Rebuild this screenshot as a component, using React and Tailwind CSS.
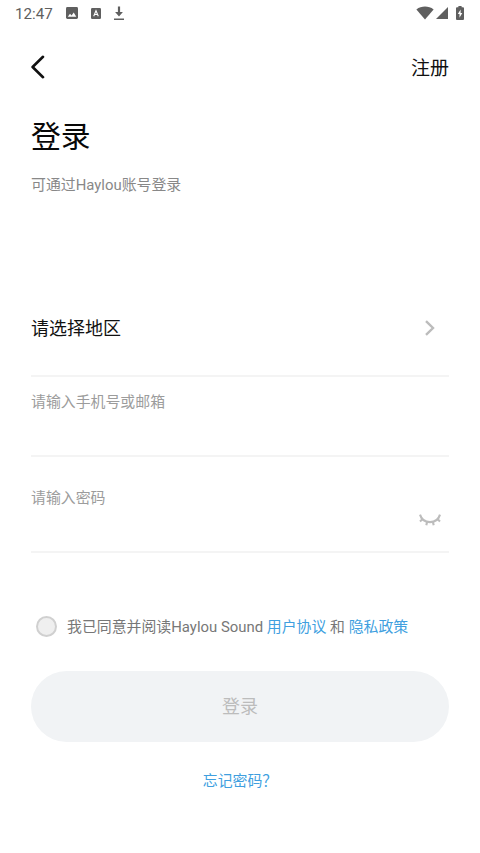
function StatusBar() {
  return (
    <div className="flex h-[27px] items-center pl-[15px] pr-4 text-[#5f5f5f]">
      <span className="w-[38px] text-[15.2px] leading-[18px] whitespace-nowrap">12:47</span>
      <svg className="mb-px ml-[13px] size-3" viewBox="0 0 12 12">
        <rect width="12" height="12" rx="1.4" fill="currentColor" />
        <path d="M1.8 9.8 4 6.7 5.6 8.5 7.7 5.6 10.3 9.8Z" fill="#fff" />
      </svg>
      <svg className="mb-px ml-[12.5px] h-[11px] w-[10px]" viewBox="0 0 10 11">
        <rect width="10" height="11" rx="1.2" fill="currentColor" />
        <path d="M2.7 8.2 5 2.7 7.3 8.2M3.5 6.5h3" fill="none" stroke="#fff" strokeWidth="1.1" />
      </svg>
      <svg className="mb-px ml-3 h-[15px] w-3" viewBox="0 0 12 15">
        <path d="M4.9 0.5h2.2v5.6h2.8L6 10.6 2.1 6.1h2.8ZM1 12.6h10v1.5H1Z" fill="currentColor" />
      </svg>
      <div className="mb-[2px] ml-auto flex items-center">
        <svg className="h-[14px] w-[18px]" viewBox="0 0 18 14">
          <path d="M9 13.6 0.4 3.4C5.4-0.4 12.6-0.4 17.6 3.4Z" fill="currentColor" />
        </svg>
        <svg className="ml-[2px] mt-px size-3" viewBox="0 0 12 12">
          <path d="M12 0v12H0Z" fill="currentColor" />
        </svg>
        <svg className="ml-2 h-[14px] w-2" viewBox="0 0 8 14">
          <path d="M2.4 0h3.2v1.3H7q1 0 1 1V13q0 1-1 1H1q-1 0-1-1V2.3q0-1 1-1h1.4Z" fill="currentColor" />
          <path d="M4.6 3.4 1.8 8h1.7v3.7L6.3 7H4.6Z" fill="#fff" />
        </svg>
      </div>
    </div>
  );
}

export default function App() {
  return (
    <div
      lang="zh-CN"
      className="flex h-[853px] w-[480px] flex-col bg-white font-['Roboto','Noto_Sans_CJK_SC',sans-serif]"
    >
      <StatusBar />
      <main className="flex flex-col px-[31px]">
        <header className="flex h-20 items-center justify-between">
          <button aria-label="返回">
            <svg className="h-6 w-[14px]" viewBox="0 0 14 24" fill="none" stroke="#111" strokeWidth="2.6">
              <path d="M12 1.8 1.6 12 12 22.2" strokeLinecap="round" strokeLinejoin="round" />
            </svg>
          </button>
          <button className="pt-[3px] text-[19px] leading-7 text-[#111]">注册</button>
        </header>

        <h1 className="h-[58px] text-[29.8px] leading-[60px] text-[#080808]">登录</h1>
        <p className="mt-2 h-6 text-[14.9px] leading-6 text-[#888]">可通过Haylou账号登录</p>

        <button className="mt-[83px] flex h-[97px] items-center justify-between border-b-2 border-[#f4f4f4] pr-[14px] text-left">
          <span className="pt-[2px] text-[18px] leading-7 text-[#111]">请选择地区</span>
          <svg className="h-4 w-[10px]" viewBox="0 0 10 16" fill="none" stroke="#bcbcbc" strokeWidth="2.4">
            <path d="M1 1.2 8 8 1 14.8" />
          </svg>
        </button>
        <div className="h-20 border-b-2 border-[#f4f4f4] pt-[13px] text-[14.9px] leading-6 text-[#9c9c9c]">
          请输入手机号或邮箱
        </div>
        <div className="flex h-24 justify-between border-b-2 border-[#f4f4f4] pr-2 pt-[29px]">
          <span className="text-[14.9px] leading-6 text-[#9c9c9c]">请输入密码</span>
          <svg className="mt-7 h-[13px] w-[22px]" viewBox="0 0 22 13" fill="none" stroke="#bcbcbc" strokeWidth="2.1">
            <path d="M1 0.6C4 10.6 18 10.6 21 0.6M3.6 5 1 7.4M8.1 8 7.3 11.2M13.9 8l.8 3.2M18.4 5 21 7.4" />
          </svg>
        </div>

        <div className="mt-[61px] flex h-6 items-center pl-[5px]">
          <span className="size-[21px] rounded-full border-2 border-[#d0d0d0] bg-[#efefef]" />
          <p className="ml-[10px] whitespace-nowrap pt-[2px] text-[14.9px] leading-6 text-[#777]">
            我已同意并阅读Haylou Sound <a className="text-[#409fdf]">用户协议</a> 和{' '}
            <a className="text-[#409fdf]">隐私政策</a>
          </p>
        </div>

        <button className="mt-[33px] h-[71px] rounded-full bg-[#f1f3f5] text-[18px] leading-7 text-[#bcbcbc]">登录</button>
        <a className="mt-[27px] self-center text-[14.9px] leading-6 text-[#409fdf]">忘记密码？</a>
      </main>
    </div>
  );
}
